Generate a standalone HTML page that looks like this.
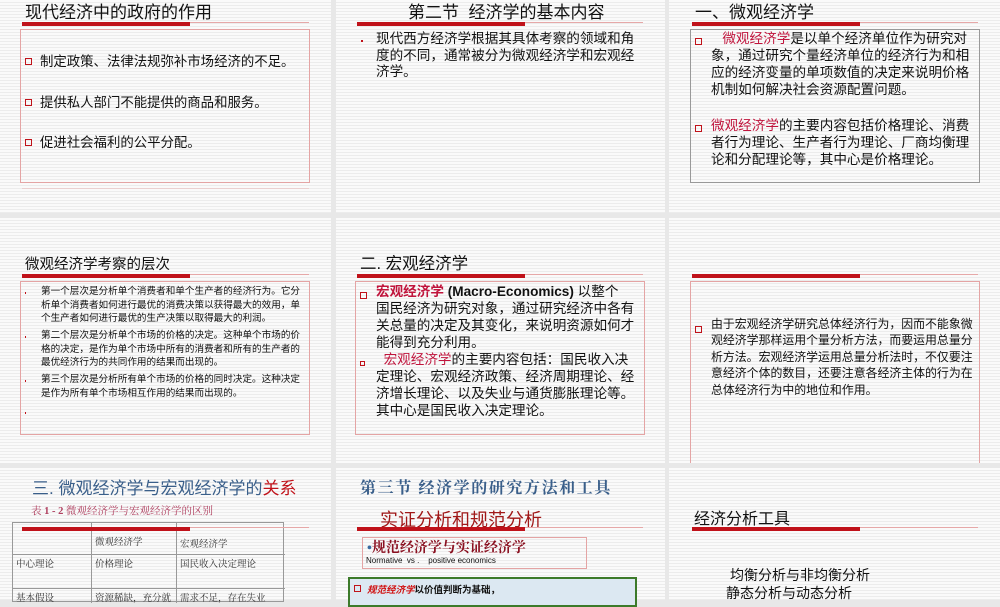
<!DOCTYPE html>
<html><head><meta charset="utf-8"><style>
*{margin:0;padding:0;box-sizing:border-box}
body{width:1000px;height:600px;overflow:hidden;background:#e8e8e8;position:relative;font-family:"Liberation Sans","Noto Sans CJK SC",sans-serif;color:#111}
.s{position:absolute;background:repeating-linear-gradient(to bottom,#fafafa 0,#fafafa 2px,#ececec 2px,#ececec 3px);overflow:hidden}
.a{position:absolute;white-space:nowrap}
.bar{position:absolute;height:4px;background:#c0121a}
.ln{position:absolute;height:1px;background:#e6a8a8}
.box{position:absolute;border:1px solid #e4a4a4}
.sq{display:inline-block;width:7px;height:7px;border:1px solid #c0121a;margin-right:8px;vertical-align:1px}
.r{color:#c0143c}
.dot{position:absolute;width:2px;height:2px;background:#c0121a}
</style></head><body>
<div class="s" style="left:0;top:0;width:331px;height:213px"></div>
<div class="s" style="left:336px;top:0;width:329px;height:213px"></div>
<div class="s" style="left:669px;top:0;width:331px;height:213px"></div>
<div class="s" style="left:0;top:218px;width:331px;height:245px"></div>
<div class="s" style="left:336px;top:218px;width:329px;height:245px"></div>
<div class="s" style="left:669px;top:218px;width:331px;height:245px"></div>
<div class="s" style="left:0;top:468px;width:331px;height:132px"></div>
<div class="s" style="left:336px;top:468px;width:329px;height:132px"></div>
<div class="s" style="left:669px;top:468px;width:331px;height:132px"></div>

<!-- slide 1 -->
<div class="a" style="left:25px;top:-2px;font-size:17px">现代经济中的政府的作用</div>
<div class="ln" style="left:22px;top:22px;width:287px"></div><div class="bar" style="left:22px;top:22px;width:168px"></div>
<div class="box" style="left:20px;top:29px;width:290px;height:154px"></div>
<div class="a" style="left:25px;top:50px;font-size:13.4px"><span class="sq"></span>制定政策、法律法规弥补市场经济的不足。</div>
<div class="a" style="left:25px;top:91px;font-size:13.4px"><span class="sq"></span>提供私人部门不能提供的商品和服务。</div>
<div class="a" style="left:25px;top:131px;font-size:13.4px"><span class="sq"></span>促进社会福利的公平分配。</div>
<div class="ln" style="left:22px;top:188px;width:287px;background:#ead0d0"></div>

<!-- slide 2 -->
<div class="a" style="left:408px;top:-2px;font-size:17px">第二节&nbsp; 经济学的基本内容</div>
<div class="ln" style="left:357px;top:22px;width:286px"></div><div class="bar" style="left:357px;top:22px;width:168px"></div>
<div class="dot" style="left:361px;top:40px"></div>
<div class="a" style="left:376px;top:31px;font-size:13.6px;line-height:16.5px">现代西方经济学根据其具体考察的领域和角<br>度的不同，通常被分为微观经济学和宏观经<br>济学。</div>

<!-- slide 3 -->
<div class="a" style="left:695px;top:-2px;font-size:17px">一、微观经济学</div>
<div class="ln" style="left:692px;top:22px;width:286px"></div><div class="bar" style="left:692px;top:22px;width:168px"></div>
<div class="box" style="left:690px;top:29px;width:290px;height:154px;border-color:#999"></div>
<div class="a" style="left:695px;top:35px;font-size:12.5px"><span class="sq"></span></div>
<div class="a" style="left:711px;top:30px;font-size:13.6px;line-height:17px">&nbsp;&nbsp;&nbsp;<span class="r">微观经济学</span>是以单个经济单位作为研究对<br>象，通过研究个量经济单位的经济行为和相<br>应的经济变量的单项数值的决定来说明价格<br>机制如何解决社会资源配置问题。</div>
<div class="a" style="left:695px;top:122px;font-size:12.5px"><span class="sq"></span></div>
<div class="a" style="left:711px;top:117px;font-size:13.6px;line-height:17px"><span class="r">微观经济学</span>的主要内容包括价格理论、消费<br>者行为理论、生产者行为理论、厂商均衡理<br>论和分配理论等，其中心是价格理论。</div>

<!-- slide 4 -->
<div class="a" style="left:25px;top:253px;font-size:14.5px">微观经济学考察的层次</div>
<div class="ln" style="left:22px;top:274px;width:287px"></div><div class="bar" style="left:22px;top:274px;width:168px"></div>
<div class="box" style="left:20px;top:281px;width:290px;height:154px"></div>
<div class="dot" style="left:25px;top:292px;width:1px"></div>
<div class="dot" style="left:25px;top:336px;width:1px"></div>
<div class="dot" style="left:25px;top:380px;width:1px"></div>
<div class="dot" style="left:25px;top:412px;width:1px"></div>
<div class="a" style="left:41px;top:285px;font-size:9.6px;line-height:13.5px">第一个层次是分析单个消费者和单个生产者的经济行为。它分<br>析单个消费者如何进行最优的消费决策以获得最大的效用，单<br>个生产者如何进行最优的生产决策以取得最大的利润。</div>
<div class="a" style="left:41px;top:329px;font-size:9.6px;line-height:13.5px">第二个层次是分析单个市场的价格的决定。这种单个市场的价<br>格的决定，是作为单个市场中所有的消费者和所有的生产者的<br>最优经济行为的共同作用的结果而出现的。</div>
<div class="a" style="left:41px;top:373px;font-size:9.6px;line-height:13.5px">第三个层次是分析所有单个市场的价格的同时决定。这种决定<br>是作为所有单个市场相互作用的结果而出现的。</div>

<!-- slide 5 -->
<div class="a" style="left:360px;top:250px;font-size:16.5px">二. 宏观经济学</div>
<div class="ln" style="left:357px;top:274px;width:286px"></div><div class="bar" style="left:357px;top:274px;width:168px"></div>
<div class="box" style="left:355px;top:281px;width:290px;height:154px"></div>
<div class="a" style="left:360px;top:289px;font-size:12.5px"><span class="sq"></span></div>
<div class="a" style="left:376px;top:283px;font-size:13.6px;line-height:17px"><b><span class="r">宏观经济学</span> (Macro-Economics)</b> 以整个<br>国民经济为研究对象，通过研究经济中各有<br>关总量的决定及其变化，来说明资源如何才<br>能得到充分利用。</div>
<div class="a" style="left:360px;top:356px;font-size:12.5px"><span class="sq" style="width:5px;height:5px"></span></div>
<div class="a" style="left:376px;top:351px;font-size:13.6px;line-height:17px">&nbsp;&nbsp;<span class="r">宏观经济学</span>的主要内容包括：国民收入决<br>定理论、宏观经济政策、经济周期理论、经<br>济增长理论、以及失业与通货膨胀理论等。<br>其中心是国民收入决定理论。</div>

<!-- slide 6 -->
<div class="ln" style="left:692px;top:274px;width:286px"></div><div class="bar" style="left:692px;top:274px;width:168px"></div>
<div class="box" style="left:690px;top:281px;width:290px;height:186px"></div>
<div class="a" style="left:695px;top:323px;font-size:12px"><span class="sq"></span></div>
<div class="a" style="left:711px;top:316px;font-size:11.9px;line-height:16.4px">由于宏观经济学研究总体经济行为，因而不能象微<br>观经济学那样运用个量分析方法，而要运用总量分<br>析方法。宏观经济学运用总量分析法时，不仅要注<br>意经济个体的数目，还要注意各经济主体的行为在<br>总体经济行为中的地位和作用。</div>
<div style="position:absolute;left:665px;top:463px;width:335px;height:5px;background:#e8e8e8"></div>

<!-- slide 7 -->
<div class="a" style="left:32px;top:474px;font-size:17px;color:#3a5f8a">三. 微观经济学与宏观经济学的<span style="color:#c0121a">关系</span></div>
<div class="a" style="left:31px;top:503px;font-size:10.5px;color:#b04060;font-family:'Liberation Serif','Noto Serif CJK SC',serif">表 <b>1 - 2</b> 微观经济学与宏观经济学的区别</div>
<div style="position:absolute;left:12px;top:522px;width:272px;height:80px;border:1px solid #999;font-family:'Liberation Serif','Noto Serif CJK SC',serif;font-size:9.5px;color:#333">
<div style="position:absolute;left:78px;top:0;width:1px;height:80px;background:#999"></div>
<div style="position:absolute;left:163px;top:0;width:1px;height:80px;background:#999"></div>
<div style="position:absolute;left:0;top:31px;width:272px;height:1px;background:#999"></div>
<div style="position:absolute;left:0;top:65px;width:272px;height:1px;background:#999"></div>
<div class="a" style="left:82px;top:11px">微观经济学</div><div class="a" style="left:167px;top:13px">宏观经济学</div>
<div class="a" style="left:3px;top:33px">中心理论</div><div class="a" style="left:82px;top:33px">价格理论</div><div class="a" style="left:167px;top:33px">国民收入决定理论</div>
<div class="a" style="left:3px;top:67px">基本假设</div><div class="a" style="left:82px;top:67px">资源稀缺，充分就</div><div class="a" style="left:167px;top:67px">需求不足，存在失业</div>
</div>
<div class="ln" style="left:190px;top:527px;width:119px"></div><div class="bar" style="left:22px;top:527px;width:168px"></div>

<!-- slide 8 -->
<div class="a" style="left:360px;top:475px;font-size:16px;color:#3a5f8a;letter-spacing:1.6px;font-weight:bold;font-family:'Liberation Serif','Noto Serif CJK SC',serif">第三节 经济学的研究方法和工具</div>
<div class="a" style="left:380px;top:506px;font-size:18px;color:#a01818">实证分析和规范分析</div>
<div class="ln" style="left:357px;top:527px;width:286px"></div><div class="bar" style="left:357px;top:527px;width:168px"></div>
<div class="box" style="left:362px;top:537px;width:225px;height:32px"></div>
<div class="a" style="left:367px;top:537px;font-size:14px;color:#8a1020;font-weight:bold;font-family:'Liberation Serif','Noto Serif CJK SC',serif"><span style="color:#3a6aa0">•</span>规范经济学与实证经济学</div>
<div class="a" style="left:366px;top:556px;font-size:8px">Normative&nbsp; vs .&nbsp;&nbsp;&nbsp; positive economics</div>
<div style="position:absolute;left:348px;top:577px;width:289px;height:30px;border:2px solid #3c7a2a;background:#dce8f2"></div>
<div class="a" style="left:354px;top:582px;font-size:9.5px;font-weight:bold"><span class="sq" style="margin-right:6px"></span><i style="color:#d01010">规范经济学</i>以价值判断为基础，</div>

<!-- slide 9 -->
<div class="a" style="left:694px;top:505px;font-size:16px">经济分析工具</div>
<div class="ln" style="left:692px;top:527px;width:286px"></div><div class="bar" style="left:692px;top:527px;width:168px"></div>
<div class="a" style="left:730px;top:565px;font-size:14px">均衡分析与非均衡分析</div>
<div class="a" style="left:726px;top:583px;font-size:14px">静态分析与动态分析</div>
</body></html>
